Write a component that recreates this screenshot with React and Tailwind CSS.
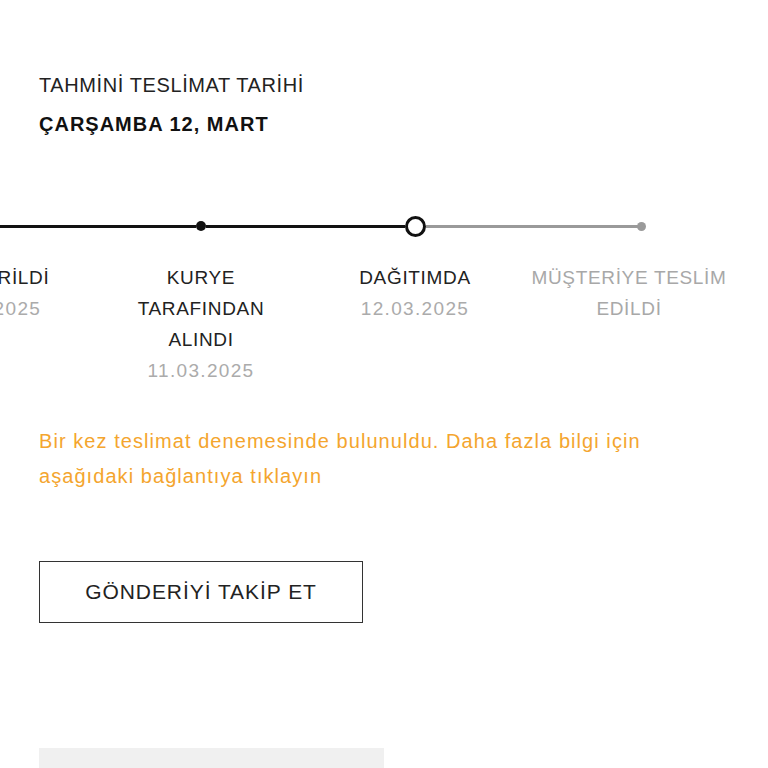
import React from 'react';

const steps = [
  { lines: ['GÖNDERİLDİ'], date: '10.03.2025', state: 'done', left: 'none', right: 'black' },
  { lines: ['KURYE', 'TARAFINDAN', 'ALINDI'], date: '11.03.2025', state: 'done', left: 'black', right: 'black' },
  { lines: ['DAĞITIMDA'], date: '12.03.2025', state: 'current', left: 'black', right: 'gray' },
  { lines: ['MÜŞTERİYE TESLİM', 'EDİLDİ'], date: null, state: 'todo', left: 'gray', right: 'none' },
];

const lineClass = {
  none: 'bg-transparent',
  black: 'bg-[#111111]',
  gray: 'bg-[#9a9a9a]',
};

function Track({ step }) {
  // last step: the grey line runs a little past the label centre
  if (step.state === 'todo') {
    return (
      <div className="w-full h-[22px] flex items-center">
        <div className="w-[119px] h-[3px] bg-[#9a9a9a]" />
        <div className="w-[9px] h-[9px] rounded-full bg-[#9a9a9a] shrink-0 -ml-[4px]" />
      </div>
    );
  }
  return (
    <div className="w-full h-[22px] flex items-center">
      <div className={`flex-1 h-[3px] ${lineClass[step.left]}`} />
      {step.state === 'current' ? (
        <div className="w-[21px] h-[21px] rounded-full border-[3px] border-[#111111] bg-white shrink-0" />
      ) : (
        <div className="w-[10px] h-[10px] rounded-full bg-[#111111] shrink-0" />
      )}
      <div className={`flex-1 h-[3px] ${lineClass[step.right]}`} />
    </div>
  );
}

function Step({ step }) {
  return (
    <div className="w-[214px] shrink-0 flex flex-col items-center">
      <Track step={step} />

      <div className="mt-[25px] text-center text-[19px] leading-[31px]">
        {step.lines.map((l) => (
          <div
            key={l}
            className={`whitespace-nowrap tracking-[0.035em] ${step.state === 'todo' ? 'text-[#a8a8a8]' : 'text-[#222222]'}`}
          >
            {l}
          </div>
        ))}
        {step.date && (
          <div className="text-[#ababab] whitespace-nowrap tracking-[0.07em]">{step.date}</div>
        )}
      </div>
    </div>
  );
}

function App() {
  return (
    <div
      className="w-[768px] h-[768px] overflow-hidden bg-white"
      style={{ fontFamily: '"Liberation Sans", Arial, sans-serif' }}
    >
      <div className="pl-[39px] pt-[73px]">
        <div className="text-[20px] leading-[24px] tracking-[0.03em] text-[#222222]">
          TAHMİNİ TESLİMAT TARİHİ
        </div>
        <div className="mt-[15px] text-[20px] leading-[24px] font-bold tracking-[0.05em] text-[#111111]">
          ÇARŞAMBA 12, MART
        </div>
      </div>

      {/* timeline, scrolled horizontally */}
      <div className="mt-[79px] ml-[-120px] flex">
        {steps.map((s, i) => (
          <Step key={i} step={s} />
        ))}
      </div>

      <div className="pl-[39px]">
        <p className="mt-[38px] w-[660px] text-[20px] leading-[35px] tracking-[0.053em] text-[#f4a52e]">
          Bir kez teslimat denemesinde bulunuldu. Daha fazla bilgi için
          <br />
          aşağıdaki bağlantıya tıklayın
        </p>

        <button className="mt-[67px] w-[324px] h-[62px] border border-[#333333] bg-white text-[21px] tracking-[0.045em] text-[#222222]">
          GÖNDERİYİ TAKİP ET
        </button>

        <div className="mt-[125px] w-[345px] h-[40px] bg-[#f0f0f0]" />
      </div>
    </div>
  );
}

export default App;
